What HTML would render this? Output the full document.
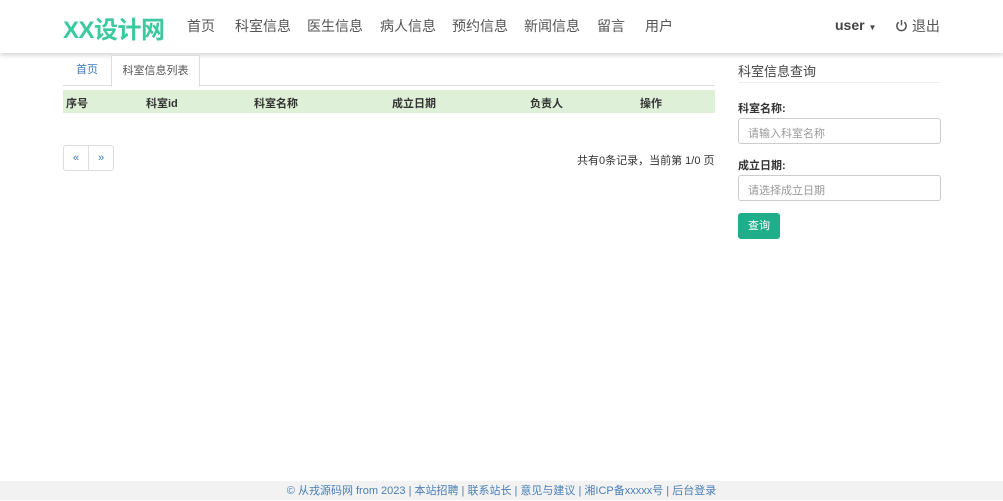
<!DOCTYPE html>
<html><head><meta charset="utf-8"><style>
*{box-sizing:border-box;margin:0;padding:0}
body{width:1003px;height:500px;overflow:hidden;background:#fff;font-family:"Liberation Sans","Noto Sans CJK SC",sans-serif;font-size:12px;color:#333;position:relative}
.nav{position:absolute;left:0;top:0;width:1003px;height:53px;background:#fff;box-shadow:0 2px 5px rgba(0,0,0,.18)}
.logo{position:absolute;left:63px;top:10px;font-size:24px;font-weight:bold;color:#3dc9a0;letter-spacing:-0.5px}
.nav a{position:absolute;top:16px;font-size:14px;color:#555;text-decoration:none}
.abs{position:absolute}
.tabs{position:absolute;left:63px;top:55px;width:652px;height:31px;border-bottom:1px solid #ddd}
.t1{position:absolute;left:0;top:0;width:48px;height:31px;line-height:31px;text-align:center;color:#3a7bbf;font-size:11px}
.t2{position:absolute;left:48px;top:0;width:89px;height:32px;line-height:31px;text-align:center;border:1px solid #ddd;border-bottom:1px solid #fff;background:#fff;font-size:11px;color:#555}
.th{position:absolute;left:63px;top:90px;width:652px;height:23px;background:#dff0d8;font-weight:bold;font-size:11px}
.th span{position:absolute;top:5px}
.pg{position:absolute;left:63px;top:145px;width:51px;height:26px;border:1px solid #ddd;border-radius:3px}
.pg i{position:absolute;top:6px;font-style:normal;color:#3a7bbf;font-size:11px}
label{position:absolute;font-weight:bold;font-size:11px}
.inp{position:absolute;left:738px;width:203px;height:26px;border:1px solid #ccc;border-radius:3px;color:#999;font-size:11px;padding:6px 9px}
.btn{position:absolute;left:738px;top:213px;width:42px;height:26px;background:#1fae8a;border-radius:3px;color:#fff;font-size:11px;text-align:center;line-height:26px}
.foot{position:absolute;left:0;top:481px;width:1003px;height:19px;background:#f2f2f2;text-align:center;color:#4a7fb5;font-size:11px;line-height:20px}
</style></head><body>
<div class="nav">
<div class="logo">XX设计网</div>
<a style="left:187px">首页</a><a style="left:235px">科室信息</a><a style="left:307px">医生信息</a><a style="left:380px">病人信息</a><a style="left:452px">预约信息</a><a style="left:524px">新闻信息</a><a style="left:597px">留言</a><a style="left:645px">用户</a>
<a style="left:835px;font-weight:bold;color:#444;top:17px">user <span style="font-size:8px">▼</span></a>
<a style="left:895px"><svg width="13" height="13" viewBox="0 0 14 14" style="vertical-align:-1px"><path d="M4 3.5A5 5 0 1 0 10 3.5" fill="none" stroke="#555" stroke-width="1.6"/><path d="M7 1v6" stroke="#555" stroke-width="1.6"/></svg> 退出</a>
</div>
<div class="tabs"><div class="t1">首页</div><div class="t2">科室信息列表</div></div>
<div class="th"><span style="left:3px">序号</span><span style="left:83px">科室id</span><span style="left:191px">科室名称</span><span style="left:329px">成立日期</span><span style="left:467px">负责人</span><span style="left:577px">操作</span></div>
<div class="pg"><i style="left:9px">«</i><div class="abs" style="left:24px;top:0;width:1px;height:24px;background:#ddd"></div><i style="left:34px">»</i></div>
<div class="abs" style="left:577px;top:152px;font-size:11px">共有0条记录，当前第 1/0 页</div>
<div class="abs" style="left:738px;top:61px;font-size:13px;color:#444">科室信息查询</div>
<div class="abs" style="left:738px;top:82px;width:203px;height:1px;background:#eee"></div>
<label style="left:738px;top:100px">科室名称:</label>
<div class="inp" style="top:118px">请输入科室名称</div>
<label style="left:738px;top:157px">成立日期:</label>
<div class="inp" style="top:175px">请选择成立日期</div>
<div class="btn">查询</div>
<div class="foot">© 从戎源码网 from 2023 | 本站招聘 | 联系站长 | 意见与建议 | 湘ICP备xxxxx号 | 后台登录</div>
</body></html>
